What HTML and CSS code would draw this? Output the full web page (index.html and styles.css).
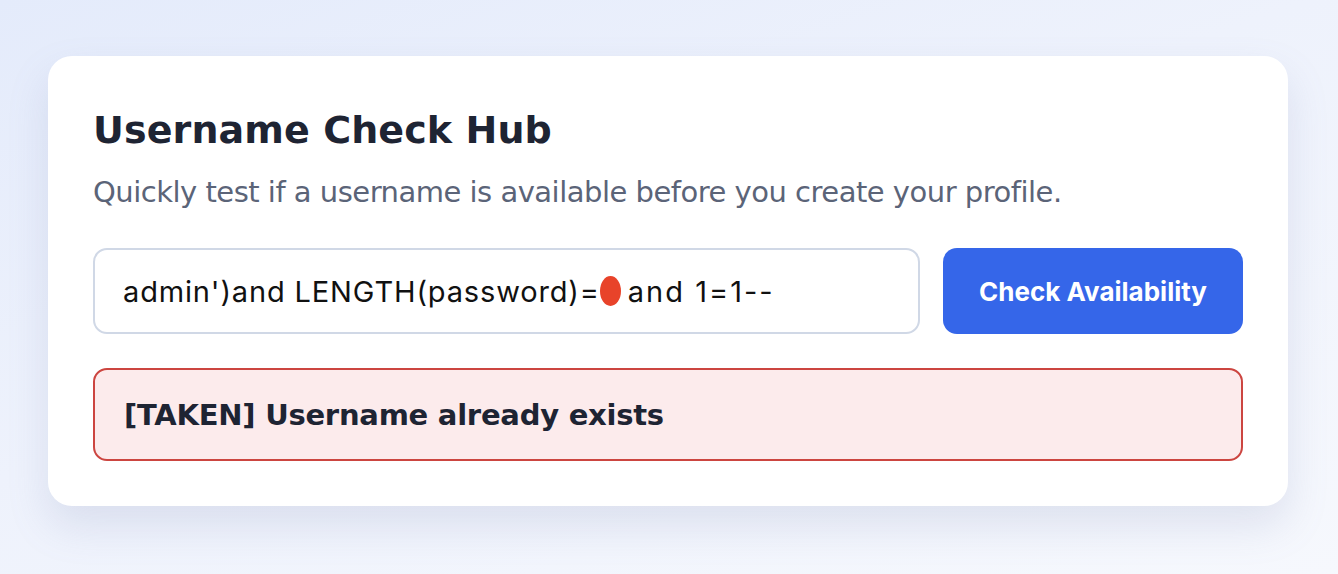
FILE: index.html
```html
<!DOCTYPE html>
<html lang="en">
<head>
<meta charset="utf-8">
<title>Username Check Hub</title>
<link rel="stylesheet" href="styles.css">
</head>
<body>
<main class="card">
  <h1 class="title">Username Check Hub</h1>
  <p class="subtitle">Quickly test if a username is available before you create your profile.</p>
  <form class="row">
    <div class="field"><span class="value">admin')and LENGTH(password)=<span class="blob"></span> <span class="tail">and 1=1--</span></span></div>
    <button class="btn" type="button">Check Availability</button>
  </form>
  <div class="result">[TAKEN] Username already exists</div>
</main>
</body>
</html>
```
FILE: styles.css
```css
html, body { margin: 0; height: 100%; }
body {
  background: linear-gradient(160deg, #e4ebfb 0%, #eef2fc 45%, #f6f8fd 100%);
  padding: 56px 50px 0 48px;
  box-sizing: border-box;
}
.card {
  width: 1240px;
  box-sizing: border-box;
  background: #fff;
  border-radius: 24px;
  padding: 51px 45px 45px 45px;
  box-shadow: 0 20px 40px rgba(120, 135, 180, 0.18);
}
.title {
  margin: 0;
  font-family: "DejaVu Sans", sans-serif;
  font-weight: bold;
  font-size: 38px;
  line-height: 46px;
  color: #1e2433;
  letter-spacing: 0.1px;
}
.subtitle {
  margin: 19px 0 0;
  font-family: "DejaVu Sans", sans-serif;
  font-size: 29px;
  line-height: 40px;
  color: #5b6478;
  letter-spacing: -0.5px;
}
.row {
  display: flex;
  gap: 23px;
  margin-top: 36px;
}
.field {
  flex: 1;
  height: 86px;
  box-sizing: border-box;
  border: 2px solid #d0d8e6;
  border-radius: 14px;
  display: flex;
  align-items: center;
  padding: 0 28px;
  font-family: Inter, "Liberation Sans", sans-serif;
  font-size: 29px;
  letter-spacing: 0.85px;
  color: #111;
}
.tail {
  letter-spacing: 2px;
}
.blob {
  display: inline-block;
  width: 21px;
  height: 30px;
  border-radius: 50%;
  background: #e8432a;
  vertical-align: -4px;
  margin: 0 -2px 0 0;
}
.btn {
  width: 300px;
  height: 86px;
  border: 0;
  border-radius: 14px;
  background: #3566e9;
  color: #fff;
  font-family: Inter, "Liberation Sans", sans-serif;
  font-weight: 700;
  font-size: 26px;
}
.result {
  margin-top: 34px;
  height: 93px;
  box-sizing: border-box;
  border: 2px solid #cc4540;
  border-radius: 14px;
  background: #fcebec;
  display: flex;
  align-items: center;
  padding: 0 29px;
  font-family: "DejaVu Sans", sans-serif;
  font-weight: bold;
  font-size: 29px;
  letter-spacing: -0.25px;
  color: #1e2433;
}
```
